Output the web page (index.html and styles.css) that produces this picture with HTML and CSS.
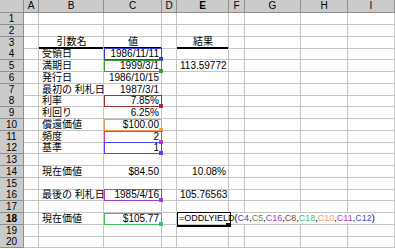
FILE: index.html
```html
<!DOCTYPE html>
<html lang="ja">
<head>
<meta charset="utf-8">
<link rel="stylesheet" href="styles.css">
</head>
<body>
<div class="sheet">
  <div class="row head">
    <div class="hd corner"></div><div class="hd">A</div><div class="hd">B</div><div class="hd">C</div><div class="hd">D</div><div class="hd active">E</div><div class="hd">F</div><div class="hd">G</div><div class="hd">H</div><div class="hd">I</div>
  </div>
  <div class="row">
    <div class="rh">1</div><div class="c"></div><div class="c"></div><div class="c"></div><div class="c"></div><div class="c"></div><div class="c"></div><div class="c"></div><div class="c"></div><div class="c"></div>
  </div>
  <div class="row">
    <div class="rh">2</div><div class="c"></div><div class="c"></div><div class="c"></div><div class="c"></div><div class="c"></div><div class="c"></div><div class="c"></div><div class="c"></div><div class="c"></div>
  </div>
  <div class="row">
    <div class="rh">3</div><div class="c"></div><div class="c ctr thick">引数名</div><div class="c ctr thick">値</div><div class="c"></div><div class="c ctr thick">結果</div><div class="c"></div><div class="c"></div><div class="c"></div><div class="c"></div>
  </div>
  <div class="row">
    <div class="rh">4</div><div class="c"></div><div class="c">受領日</div><div class="c num rf blue">1986/11/11</div><div class="c"></div><div class="c"></div><div class="c"></div><div class="c"></div><div class="c"></div><div class="c"></div>
  </div>
  <div class="row">
    <div class="rh">5</div><div class="c"></div><div class="c">満期日</div><div class="c num rf green">1999/3/1</div><div class="c"></div><div class="c num">113.59772</div><div class="c"></div><div class="c"></div><div class="c"></div><div class="c"></div>
  </div>
  <div class="row">
    <div class="rh">6</div><div class="c"></div><div class="c">発行日</div><div class="c num">1986/10/15</div><div class="c"></div><div class="c"></div><div class="c"></div><div class="c"></div><div class="c"></div><div class="c"></div>
  </div>
  <div class="row">
    <div class="rh">7</div><div class="c"></div><div class="c">最初の 利札日</div><div class="c num">1987/3/1</div><div class="c"></div><div class="c"></div><div class="c"></div><div class="c"></div><div class="c"></div><div class="c"></div>
  </div>
  <div class="row">
    <div class="rh">8</div><div class="c"></div><div class="c">利率</div><div class="c num rf maroon">7.85%</div><div class="c"></div><div class="c"></div><div class="c"></div><div class="c"></div><div class="c"></div><div class="c"></div>
  </div>
  <div class="row">
    <div class="rh">9</div><div class="c"></div><div class="c">利回り</div><div class="c num">6.25%</div><div class="c"></div><div class="c"></div><div class="c"></div><div class="c"></div><div class="c"></div><div class="c"></div>
  </div>
  <div class="row">
    <div class="rh">10</div><div class="c"></div><div class="c">償還価値</div><div class="c num rf orange">$100.00</div><div class="c"></div><div class="c"></div><div class="c"></div><div class="c"></div><div class="c"></div><div class="c"></div>
  </div>
  <div class="row">
    <div class="rh">11</div><div class="c"></div><div class="c">頻度</div><div class="c num rf pink">2</div><div class="c"></div><div class="c"></div><div class="c"></div><div class="c"></div><div class="c"></div><div class="c"></div>
  </div>
  <div class="row">
    <div class="rh">12</div><div class="c"></div><div class="c">基準</div><div class="c num rf blue2">1</div><div class="c"></div><div class="c"></div><div class="c"></div><div class="c"></div><div class="c"></div><div class="c"></div>
  </div>
  <div class="row">
    <div class="rh">13</div><div class="c"></div><div class="c"></div><div class="c"></div><div class="c"></div><div class="c"></div><div class="c"></div><div class="c"></div><div class="c"></div><div class="c"></div>
  </div>
  <div class="row">
    <div class="rh">14</div><div class="c"></div><div class="c">現在価値</div><div class="c num">$84.50</div><div class="c"></div><div class="c num">10.08%</div><div class="c"></div><div class="c"></div><div class="c"></div><div class="c"></div>
  </div>
  <div class="row">
    <div class="rh">15</div><div class="c"></div><div class="c"></div><div class="c"></div><div class="c"></div><div class="c"></div><div class="c"></div><div class="c"></div><div class="c"></div><div class="c"></div>
  </div>
  <div class="row">
    <div class="rh">16</div><div class="c"></div><div class="c">最後の 利札日</div><div class="c num rf purple">1985/4/16</div><div class="c"></div><div class="c num">105.76563</div><div class="c"></div><div class="c"></div><div class="c"></div><div class="c"></div>
  </div>
  <div class="row">
    <div class="rh">17</div><div class="c"></div><div class="c"></div><div class="c"></div><div class="c"></div><div class="c"></div><div class="c"></div><div class="c"></div><div class="c"></div><div class="c"></div>
  </div>
  <div class="row">
    <div class="rh active">18</div><div class="c"></div><div class="c">現在価値</div><div class="c num rf lgreen">$105.77</div><div class="c"></div><div class="c formula"><span class="ftext">=ODDLYIELD(<span class="t-blue">C4</span>,<span class="t-green">C5</span>,<span class="t-purple">C16</span>,<span class="t-maroon">C8</span>,<span class="t-lgreen">C18</span>,<span class="t-orange">C10</span>,<span class="t-pink">C11</span>,<span class="t-blue2">C12</span>)</span></div>
  </div>
  <div class="row">
    <div class="rh">19</div><div class="c"></div><div class="c"></div><div class="c"></div><div class="c"></div><div class="c"></div><div class="c"></div><div class="c"></div><div class="c"></div><div class="c"></div>
  </div>
  <div class="row">
    <div class="rh">20</div><div class="c"></div><div class="c"></div><div class="c"></div><div class="c"></div><div class="c"></div><div class="c"></div><div class="c"></div><div class="c"></div><div class="c"></div>
  </div>
</div>
</body>
</html>
```

FILE: styles.css
```css
* { box-sizing: border-box; margin: 0; padding: 0; }
html, body { margin: 0; background: #fff; overflow: hidden; }
body {
  font-family: "Liberation Sans", "Noto Sans CJK JP", sans-serif;
  font-size: 10px;
  color: #000;
}
.sheet {
  display: flex;
  flex-direction: column;
  width: 395px;
  height: 249px;
}
.row {
  display: grid;
  grid-template-columns: 24px 15px 65px 58px 15px 52px 16px 56px 47px 47px;
  height: 11.75px;
  flex: none;
}
.row.head { height: 13px; }

.hd, .rh {
  background: #cbcbcb;
  border-right: 1px solid #8e8e8e;
  border-bottom: 1px solid #8e8e8e;
  text-align: center;
  color: #000;
  font-size: 10px;
  white-space: nowrap;
}
.hd { line-height: 12px; }
.rh { line-height: 11px; }
.active { font-weight: bold; }

.c {
  border-right: 1px solid #c6c6c6;
  border-bottom: 1px solid #c6c6c6;
  line-height: 11px;
  white-space: nowrap;
  padding: 0 2px 0 3px;
  overflow: visible;
}
.ctr { text-align: center; }
.num { text-align: right; }
.thick { border-bottom: 2px solid #000; line-height: 10px; }

.rf { position: relative; outline: 1px solid var(--rf); outline-offset: -1px; }
.rf::after {
  content: "";
  position: absolute;
  right: -2px;
  bottom: -2px;
  width: 4px;
  height: 4px;
  background: var(--rf);
}
.blue { --rf: #3d3dd0; }
.green { --rf: #3a9a3a; }
.maroon { --rf: #9a3434; }
.orange { --rf: #f59a48; }
.pink { --rf: #d83a9a; }
.blue2 { --rf: #4848f0; }
.purple { --rf: #a040d0; }
.lgreen { --rf: #40c060; }

.t-blue { color: #3d3dd0; }
.t-green { color: #3a9a3a; }
.t-maroon { color: #9a3434; }
.t-orange { color: #f59a68; }
.t-pink { color: #c838c8; }
.t-blue2 { color: #4848f0; }
.t-purple { color: #a040d0; }
.t-lgreen { color: #40c070; }

.formula {
  grid-column: span 5;
  position: relative;
  padding-left: 2px;
  font-size: 9px;
}
.ftext { position: relative; z-index: 1; }
.formula::before {
  content: "";
  position: absolute;
  left: 0;
  top: -1px;
  width: 52px;
  height: calc(100% + 1px);
  border: 1px solid #000;
  border-bottom-width: 2px;
}
.formula::after {
  content: "";
  position: absolute;
  left: 49px;
  bottom: -2px;
  width: 4px;
  height: 3px;
  background: #000;
}
```
